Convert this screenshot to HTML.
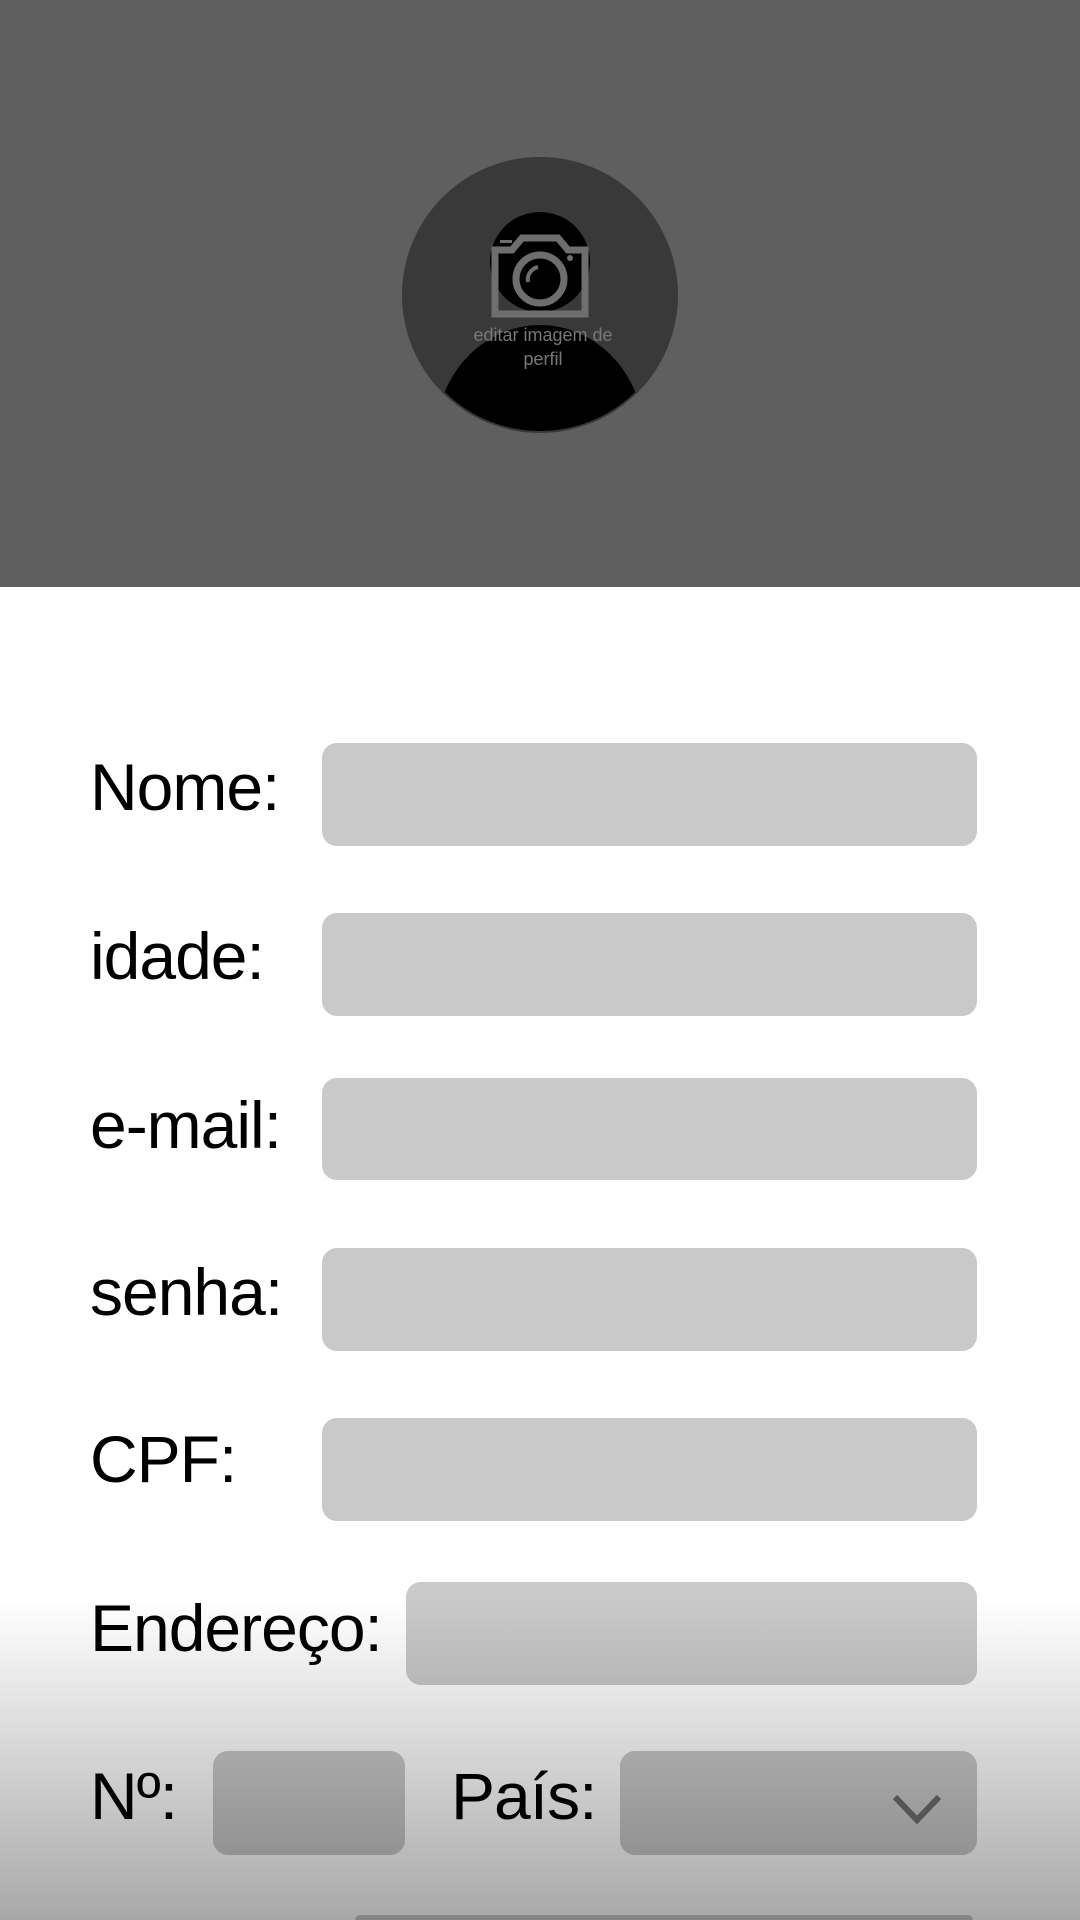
<!DOCTYPE html>
<html style="width:1080px;height:1920px;overflow:hidden"><head><meta charset="utf-8"><style>
body{margin:0;width:1080px;height:1920px;position:relative;overflow:hidden;background:#fff;font-family:"Liberation Sans",sans-serif}
.hdr{position:absolute;left:0;top:0;width:1080px;height:587px;background:#5f5f5f}
.f{position:absolute;background:#c9c9c9;border-radius:15px}
.l{position:absolute;font-size:66px;color:#000;line-height:1;letter-spacing:-1px}
.ov{position:absolute;left:0;top:1600px;width:1080px;height:320px;background:linear-gradient(rgba(0,0,0,0),rgba(0,0,0,0.34))}
</style></head><body>
<div class="hdr"></div>
<svg style="position:absolute;left:0;top:0" width="1080" height="587">
<defs><clipPath id="c"><circle cx="540" cy="295" r="136"/></clipPath></defs>
<circle cx="540" cy="295" r="138" fill="#393939"/>
<g clip-path="url(#c)">
<circle cx="540" cy="262" r="50" fill="#000"/>
<ellipse cx="540" cy="440" rx="105" ry="115" fill="#000"/>
</g>
<g fill="none" stroke="#6e6e6e" stroke-width="7">
<path d="M495 250 h17 l10-12 h36 l10 12 h17 v64 h-90 z"/>
<circle cx="540" cy="279" r="24"/>
<path d="M528 282 a13 13 0 0 1 10-15" stroke-width="4"/>
</g>
<rect x="500" y="240" width="12" height="3" fill="#6e6e6e"/>
<circle cx="570" cy="258" r="3" fill="#6e6e6e"/>
<text x="543" y="341" text-anchor="middle" font-family="Liberation Sans" font-size="18" fill="#787878">editar imagem de</text>
<text x="543" y="365" text-anchor="middle" font-family="Liberation Sans" font-size="18" fill="#787878">perfil</text>
</svg>
<div class="l" style="left:90px;top:754px">Nome:</div>
<div class="f" style="left:322px;top:743px;width:655px;height:103px"></div>
<div class="l" style="left:90px;top:923px">idade:</div>
<div class="f" style="left:322px;top:913px;width:655px;height:103px"></div>
<div class="l" style="left:90px;top:1092px">e-mail:</div>
<div class="f" style="left:322px;top:1078px;width:655px;height:102px"></div>
<div class="l" style="left:90px;top:1259px">senha:</div>
<div class="f" style="left:322px;top:1248px;width:655px;height:103px"></div>
<div class="l" style="left:90px;top:1426px">CPF:</div>
<div class="f" style="left:322px;top:1418px;width:655px;height:103px"></div>
<div class="l" style="left:90px;top:1595px">Endereço:</div>
<div class="f" style="left:406px;top:1582px;width:571px;height:103px"></div>
<div class="l" style="left:90px;top:1763px">Nº:</div>
<div class="f" style="left:213px;top:1751px;width:192px;height:104px"></div>
<div class="l" style="left:451px;top:1763px">País:</div>
<div class="f" style="left:620px;top:1751px;width:357px;height:104px"></div>
<div class="f" style="left:355px;top:1915px;width:618px;height:5px;border-radius:15px 15px 0 0"></div>
<div class="ov"></div>
<svg style="position:absolute;left:890px;top:1790px" width="54" height="36"><path d="M5 7 L27 30 L49 7" fill="none" stroke="#555" stroke-width="6"/></svg>
</body></html>
